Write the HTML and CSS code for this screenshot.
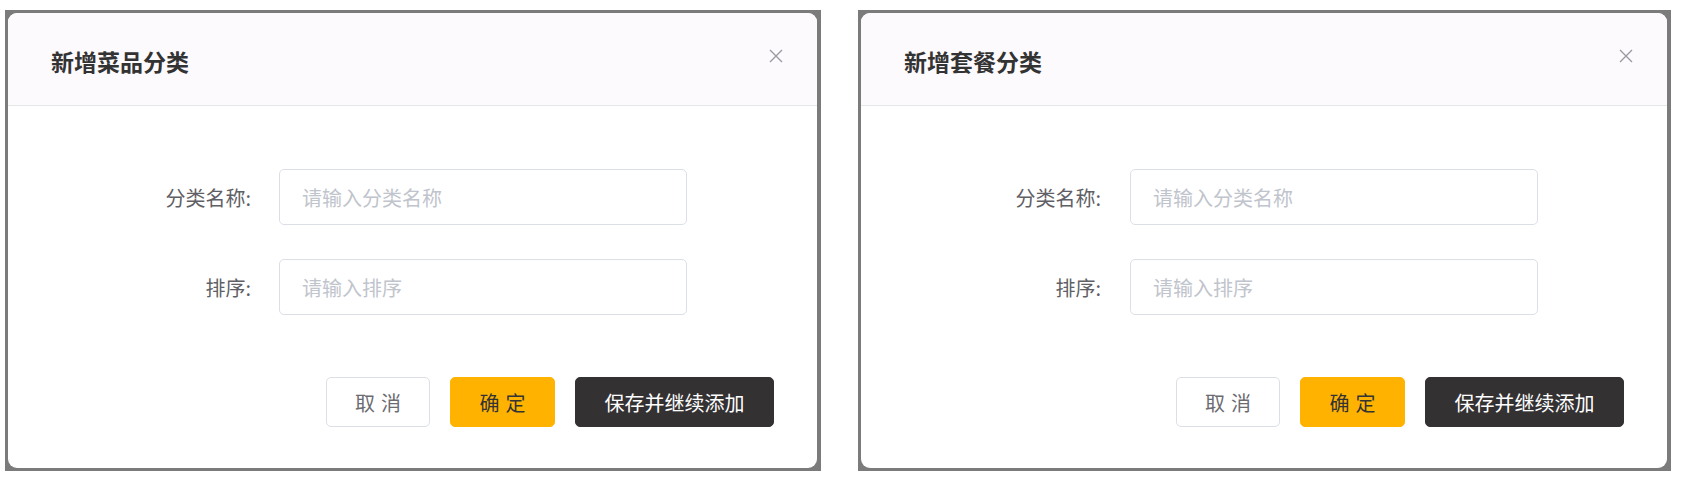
FILE: index.html
```html
<!DOCTYPE html>
<html lang="zh-CN">
<head>
<meta charset="utf-8">
<title>分类弹窗</title>
<link rel="stylesheet" href="styles.css">
</head>
<body>
<div class="page">
  <div class="shot shot-left">
    <div class="dialog">
      <div class="dialog-header">
        <span class="dialog-title">新增菜品分类</span>
        <svg class="close" viewBox="0 0 16 16" width="16" height="16"><path d="M2 2 L14 14 M14 2 L2 14" stroke="#9a9aa0" stroke-width="1.4" fill="none"/></svg>
      </div>
      <div class="dialog-body">
        <div class="form-row">
          <label class="form-label">分类名称:</label>
          <div class="input"><span class="placeholder">请输入分类名称</span></div>
        </div>
        <div class="form-row">
          <label class="form-label">排序:</label>
          <div class="input"><span class="placeholder">请输入排序</span></div>
        </div>
      </div>
      <div class="dialog-footer">
        <button class="btn btn-cancel">取消</button>
        <button class="btn btn-ok">确定</button>
        <button class="btn btn-dark">保存并继续添加</button>
      </div>
    </div>
  </div>
  <div class="shot shot-right">
    <div class="dialog">
      <div class="dialog-header">
        <span class="dialog-title">新增套餐分类</span>
        <svg class="close" viewBox="0 0 16 16" width="16" height="16"><path d="M2 2 L14 14 M14 2 L2 14" stroke="#9a9aa0" stroke-width="1.4" fill="none"/></svg>
      </div>
      <div class="dialog-body">
        <div class="form-row">
          <label class="form-label">分类名称:</label>
          <div class="input"><span class="placeholder">请输入分类名称</span></div>
        </div>
        <div class="form-row">
          <label class="form-label">排序:</label>
          <div class="input"><span class="placeholder">请输入排序</span></div>
        </div>
      </div>
      <div class="dialog-footer">
        <button class="btn btn-cancel">取消</button>
        <button class="btn btn-ok">确定</button>
        <button class="btn btn-dark">保存并继续添加</button>
      </div>
    </div>
  </div>
</div>
</body>
</html>
```
FILE: styles.css
```css
* { box-sizing: border-box; }
html, body {
  margin: 0;
  background: #ffffff;
  font-family: "Noto Sans CJK SC", "Noto Sans", sans-serif;
}
.page {
  display: flex;
  gap: 37px;
  padding: 10px 0 0 5px;
}
.shot {
  background: #7b7b7b;
  padding: 3px 4px 3px 3px;
}
.shot-left { width: 816px; }
.shot-right { width: 813px; }
.dialog {
  background: #ffffff;
  border-radius: 9px;
  height: 455px;
  display: flex;
  flex-direction: column;
  overflow: hidden;
}
.dialog-header {
  height: 93px;
  flex: none;
  background: #fdfafd;
  border-bottom: 1px solid #e6e6e8;
  display: flex;
  align-items: center;
  justify-content: space-between;
  padding: 0 33px 0 43px;
}
.dialog-title {
  font-size: 23px;
  font-weight: 700;
  color: #333333;
  margin-top: 3px;
}
.close {
  align-self: flex-start;
  margin-top: 35px;
}
.dialog-body {
  padding-top: 63px;
  display: flex;
  flex-direction: column;
  gap: 34px;
}
.form-row {
  display: flex;
  align-items: center;
  height: 56px;
}
.form-label {
  width: 243px;
  text-align: right;
  font-size: 20px;
  color: #5f6066;
}
.shot-right .form-label { width: 240px; }
.input {
  margin-left: 28px;
  width: 408px;
  height: 56px;
  border: 1px solid #dcdfe6;
  border-radius: 5px;
  display: flex;
  align-items: center;
  padding-left: 22px;
}
.shot-right .input { margin-left: 29px; }
.placeholder {
  font-size: 20px;
  color: #c0c4cc;
}
.dialog-footer {
  margin-top: 62px;
  display: flex;
  justify-content: flex-end;
  gap: 20px;
  padding-right: 43px;
}
.btn {
  height: 50px;
  border-radius: 5px;
  font-family: inherit;
  font-size: 20px;
  padding: 0;
  border: 1px solid transparent;
}
.btn-cancel {
  width: 104px;
  background: #ffffff;
  border-color: #dcdfe6;
  color: #6b6b70;
  letter-spacing: 6px;
  text-indent: 6px;
}
.btn-ok {
  width: 105px;
  background: #ffb300;
  border-color: #ffb300;
  color: #333333;
  letter-spacing: 6px;
  text-indent: 6px;
}
.btn-dark {
  width: 199px;
  background: #343133;
  border-color: #343133;
  color: #ffffff;
}
```
